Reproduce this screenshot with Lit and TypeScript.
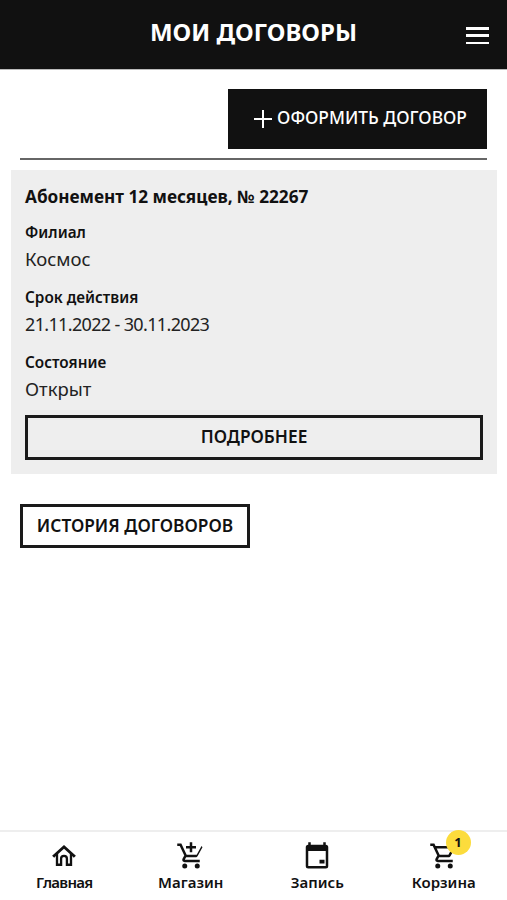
import { LitElement, html, css } from 'lit';
import { customElement } from 'lit/decorators.js';

const icons = {
  home: html`<svg viewBox="0 0 24 24" width="28" height="28" fill="#111"><path d="M12 2.500 1.800 11.700 3.600 13.400 5 12.100V20.500h5.500v-6c0-1 .6-1.600 1.500-1.600s1.500.6 1.500 1.600v6H19v-8.400l1.400 1.300 1.800-1.700L12 2.500Zm5 16h-1.500v-4a3.500 3.500 0 0 0-7 0v4H7v-8.200l5-4.500 5 4.500v8.200Z"/></svg>`,
  shop: html`<svg viewBox="0 0 24 24" width="30" height="30" fill="#111"><path d="M11 9h2V6h3V4h-3V1h-2v3H8v2h3v3Zm-4 9a2 2 0 1 0 0 4 2 2 0 0 0 0-4Zm10 0a2 2 0 1 0 0 4 2 2 0 0 0 0-4ZM7.200 14.800l.03-.12.9-1.680h7.450c.75 0 1.410-.41 1.750-1.030l3.860-7.010L20.420 4l-3.870 7H8.530L4.270 2H1v2h2l3.600 7.590-1.350 2.440C4.520 15.370 5.480 17 7 17h12v-2H7.420a.25.25 0 0 1-.22-.2Z"/></svg>`,
  event: html`<svg viewBox="0 0 24 24" width="30" height="30" fill="#111"><path d="M18 15h-4v3h4v-3ZM17 1v2H7V1H5v2a2 2 0 0 0-2 2v15a2 2 0 0 0 2 2h14a2 2 0 0 0 2-2V5a2 2 0 0 0-2-2V1h-2Zm2 19H5V8h14v12Z"/></svg>`,
  cart: html`<svg viewBox="0 0 24 24" width="30" height="30" fill="#111"><path d="M15.550 13c.750 0 1.410-.410 1.750-1.030l3.580-6.490A1 1 0 0 0 20.010 4H5.210l-.940-2H1v2h2l3.600 7.590-1.350 2.440C4.520 15.370 5.480 17 7 17h12v-2H7l1.100-2h7.450ZM6.160 6h12.150l-2.760 5H8.530L6.160 6ZM7 18a2 2 0 1 0 0 4 2 2 0 0 0 0-4Zm10 0a2 2 0 1 0 0 4 2 2 0 0 0 0-4Z"/></svg>`,
};

@customElement('app-root')
export class AppRoot extends LitElement {
  static styles = css`
    :host {
      display: flex;
      flex-direction: column;
      min-height: 900px;
      background: #fff;
      color: #111;
      font-family: 'Noto Sans', 'Liberation Sans', sans-serif;
    }

    .header {
      flex: none;
      box-sizing: border-box;
      background: #111;
      border-bottom: 1px solid #bbb;
      height: 70px;
      color: #fff;
      display: flex;
      align-items: center;
      justify-content: center;
      position: relative;
    }

    .title {
      font-size: 24px;
      font-weight: 700;
      margin-top: -6px;
    }

    .burger {
      position: absolute;
      right: 18px;
      top: 27px;
      width: 23px;
      height: 17px;
      display: flex;
      flex-direction: column;
      justify-content: space-between;
    }

    .burger span {
      height: 2.500px;
      background: #fff;
    }

    .content {
      flex: 1;
      padding: 19px 10px 0 11px;
    }

    .actions {
      display: flex;
      justify-content: flex-end;
      padding-right: 10px;
    }

    .add {
      width: 259px;
      height: 60px;
      box-sizing: border-box;
      background: #111;
      color: #fff;
      font-family: inherit;
      font-size: 17.400px;
      font-weight: 500;
      display: flex;
      align-items: center;
      justify-content: center;
      gap: 4px;
      border: none;
      padding: 0 0 0 5px;
    }

    .add span {
      margin-bottom: 4px;
    }

    .rule {
      height: 2px;
      background: #666;
      margin: 9px 10px 10px 9px;
    }

    .card {
      background: #eee;
      padding: 15px 14px 14px;
      height: 304px;
      box-sizing: border-box;
    }

    .card h2 {
      margin: 0 0 13px;
      font-size: 17.200px;
      line-height: 24px;
      font-weight: 700;
    }

    .label {
      font-size: 15.300px;
      line-height: 20px;
      font-weight: 600;
    }

    .value {
      font-size: 18.500px;
      line-height: 26px;
      color: #222;
      margin: 4px 0 15px;
    }

    .date {
      font-size: 18px;
      letter-spacing: -0.650px;
    }

    .outline {
      box-sizing: border-box;
      background: transparent;
      border: 3px solid #1a1a1a;
      color: #111;
      font-family: inherit;
      font-size: 17.300px;
      font-weight: 600;
      display: flex;
      align-items: center;
      justify-content: center;
      padding: 0 0 2px;
    }

    .more {
      width: 458px;
      height: 45px;
      margin-top: -2px;
    }

    .history {
      width: 230px;
      height: 44px;
      margin: 30px 0 0 9px;
    }

    .tabs {
      flex: none;
      height: 70px;
      box-sizing: border-box;
      border-top: 2px solid #eee;
      display: grid;
      grid-template-columns: repeat(4, 1fr);
      padding-left: 1px;
    }

    .tab {
      display: flex;
      flex-direction: column;
      align-items: center;
      padding-top: 9px;
      font-size: 15px;
      line-height: 20px;
      font-weight: 600;
      position: relative;
    }

    .tab svg {
      display: block;
      height: 30px;
      margin-bottom: 1px;
    }

    .tight {
      letter-spacing: -0.700px;
    }

    .badge {
      position: absolute;
      top: -2px;
      left: 65px;
      width: 25px;
      height: 25px;
      border-radius: 50%;
      background: #fcdc3c;
      font-size: 13px;
      font-weight: 700;
      line-height: 25px;
      text-align: center;
    }
  `;

  render() {
    return html`
      <div class="header">
        <div class="title">МОИ ДОГОВОРЫ</div>
        <div class="burger"><span></span><span></span><span></span></div>
      </div>
      <div class="content">
        <div class="actions">
          <button class="add">
            <svg width="20" height="20" viewBox="0 0 20 20"><path d="M10 1v18M1 10h18" stroke="#fff" stroke-width="2"/></svg>
            <span>ОФОРМИТЬ ДОГОВОР</span>
          </button>
        </div>
        <div class="rule"></div>
        <div class="card">
          <h2>Абонемент 12 месяцев, № 22267</h2>
          <div class="label">Филиал</div>
          <div class="value">Космос</div>
          <div class="label">Срок действия</div>
          <div class="value date">21.11.2022 - 30.11.2023</div>
          <div class="label">Состояние</div>
          <div class="value">Открыт</div>
          <button class="outline more">ПОДРОБНЕЕ</button>
        </div>
        <button class="outline history">ИСТОРИЯ ДОГОВОРОВ</button>
      </div>
      <div class="tabs">
        <div class="tab">${icons.home}<span class="tight">Главная</span></div>
        <div class="tab">${icons.shop}Магазин</div>
        <div class="tab">${icons.event}Запись</div>
        <div class="tab">${icons.cart}Корзина<span class="badge">1</span></div>
      </div>
    `;
  }
}
